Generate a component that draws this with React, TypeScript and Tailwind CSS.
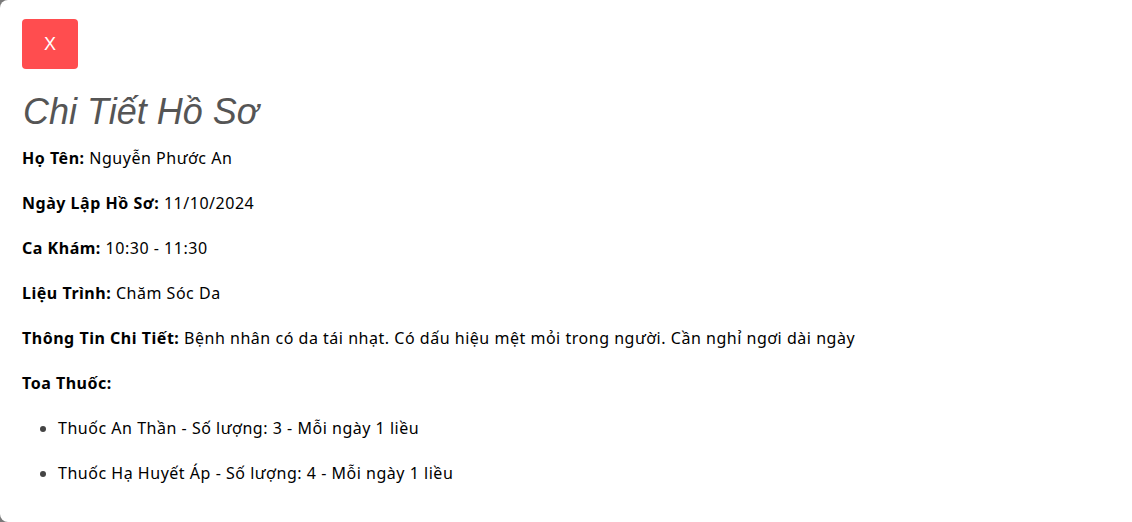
import React from 'react';

interface Medicine {
  name: string;
  quantity: number;
  dosage: string;
}

const details: { label: string; value: string }[] = [
  { label: 'Họ Tên:', value: 'Nguyễn Phước An' },
  { label: 'Ngày Lập Hồ Sơ:', value: '11/10/2024' },
  { label: 'Ca Khám:', value: '10:30 - 11:30' },
  { label: 'Liệu Trình:', value: 'Chăm Sóc Da' },
  {
    label: 'Thông Tin Chi Tiết:',
    value: 'Bệnh nhân có da tái nhạt. Có dấu hiệu mệt mỏi trong người. Cần nghỉ ngơi dài ngày',
  },
];

const medicines: Medicine[] = [
  { name: 'Thuốc An Thần', quantity: 3, dosage: 'Mỗi ngày 1 liều' },
  { name: 'Thuốc Hạ Huyết Áp', quantity: 4, dosage: 'Mỗi ngày 1 liều' },
];

const App: React.FC = () => {
  return (
    <div className="h-[522px] w-full overflow-hidden bg-[#7a7a7a]">
      <div className="h-full w-[1160px] rounded-[8px] bg-white pl-[22px] pt-[19px] font-['Noto_Sans',sans-serif] text-[16px] tracking-[0.52px] text-black">
        <button className="flex h-[50px] w-[56px] items-center justify-center rounded-[4px] bg-[#ff4d4f] font-['Liberation_Sans',Arial,sans-serif] text-[18px] tracking-normal text-white">
          X
        </button>

        <h2 className="mt-[22px] pl-[1px] font-['Liberation_Sans',Arial,sans-serif] text-[36px] italic leading-[41px] tracking-normal text-[#555555]">
          Chi Tiết Hồ Sơ
        </h2>

        <div className="mt-[12px] flex flex-col gap-[16px]">
          {details.map((d) => (
            <p key={d.label} className="leading-[29px]">
              <span className="font-bold">{d.label}</span> {d.value}
            </p>
          ))}
          <p className="leading-[29px] font-bold">Toa Thuốc:</p>
          <ul className="flex list-disc flex-col gap-[16px] pl-[36px] marker:text-[#444]">
            {medicines.map((m) => (
              <li key={m.name} className="leading-[29px]">
                {m.name} - Số lượng: {m.quantity} - {m.dosage}
              </li>
            ))}
          </ul>
        </div>
      </div>
    </div>
  );
};

export default App;
